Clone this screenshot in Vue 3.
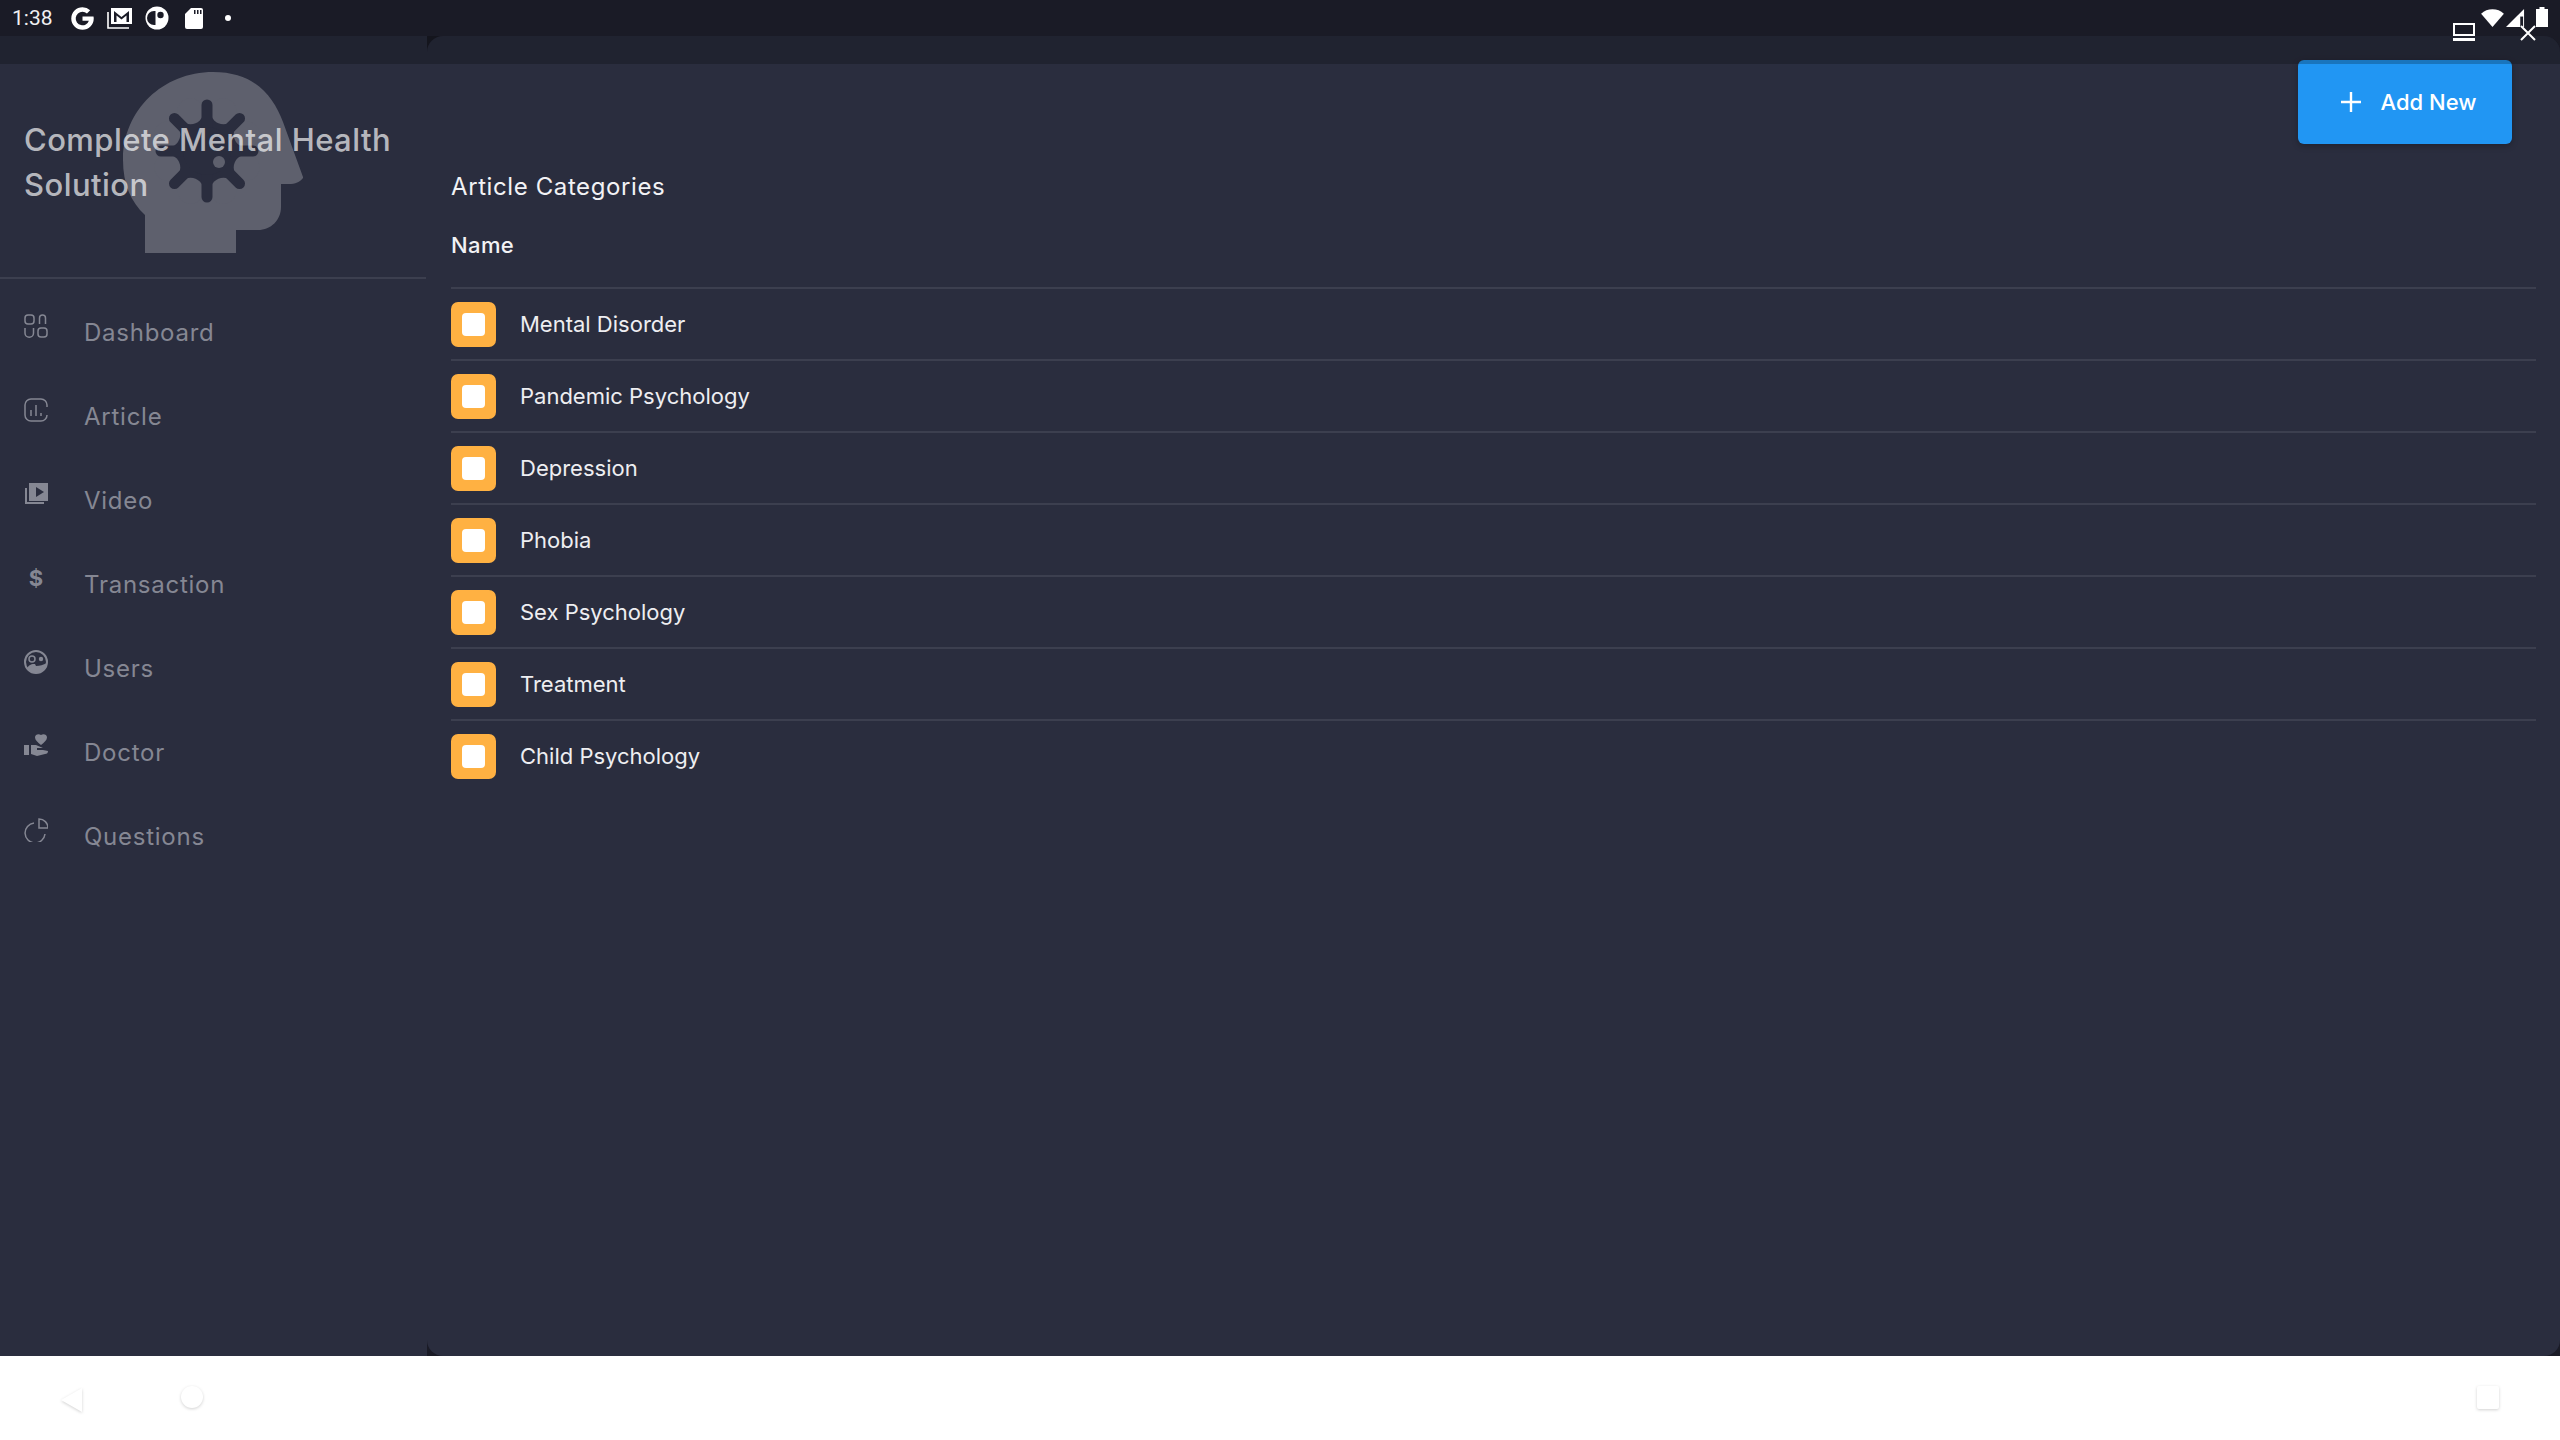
<template>
  <div class="screen">
    <div class="status-bar">
      <div class="status-left">
        <span class="time">1:38</span>
        <svg class="st-g" viewBox="3 3 18 18"><path d="M12 3.200a8.800 8.800 0 0 1 6 2.300l-2.500 2.500A5.300 5.300 0 0 0 12 6.700a5.300 5.300 0 1 0 5 7h-5v-3.300h8.600c.1.500.2 1 .2 1.600a8.800 8.800 0 1 1-8.800-8.800z" fill="#fff" /></svg>
        <svg class="st-m" viewBox="0 0 26 22"><path d="M1 5v16h21" fill="none" stroke="#fff" stroke-width="1.600" /><path d="M4 1h21v16H4z" fill="#fff" /><path d="M7 15V4l7.500 6L22 4v11h-2.500V8.500l-5 4-5-4V15z" fill="#1a1b26" /></svg>
        <svg class="st-c" viewBox="0 0 24 24"><circle cx="12" cy="12" r="11.500" fill="#fff" /><path d="M9 5h1.500v14H9a7 7 0 0 1 0-14z" fill="#1a1b26" /><circle cx="15.500" cy="9" r="3.200" fill="#1a1b26" /></svg>
        <svg class="st-sd" viewBox="0 0 18 21"><path d="M6 0h10a2 2 0 0 1 2 2v17a2 2 0 0 1-2 2H2a2 2 0 0 1-2-2V6z" fill="#fff" /><path d="M9 2h1.500v4H9zM12 2h1.500v4H12zM15 2h1.500v4H15z" fill="#1a1b26" /></svg>
        <span class="st-dot"></span>
      </div>
    </div>

    <div class="app">
      <aside class="sidebar">
        <div class="brand">
          <svg class="brand-logo" viewBox="0 0 180 181">
            <path d="M22 181V143C8 130 0 112 0 88C0 38 40 0 90 0C132 0 150 24 160 50L180 105C182 104 177 112 168 112H158V135C158 148 148 158 135 158H113V181Z" fill="#5e606d" />
            <circle cx="84" cy="79" r="37" fill="#2a2d3e" />
            <circle v-for="(p, i) in scallops" :key="i" :cx="p.x" :cy="p.y" r="13" fill="#5e606d" />
            <g stroke="#2a2d3e" stroke-width="11" stroke-linecap="round">
              <line v-for="(p, i) in arms" :key="i" x1="84" y1="79" :x2="p.x" :y2="p.y" />
            </g>
            <circle cx="84" cy="79" r="24" fill="#2a2d3e" />
            <circle cx="96" cy="90" r="6" fill="#5e606d" />
          </svg>
          <h1 class="brand-title">Complete Mental Health<br />Solution</h1>
        </div>

        <nav class="nav">
          <a v-for="item in navItems" :key="item.label" class="nav-item">
            <svg class="nav-icon" viewBox="0 0 24 24" v-html="item.icon"></svg>
            <span class="nav-label">{{ item.label }}</span>
          </a>
        </nav>
      </aside>

      <main class="content">
        <div class="toolbar">
          <button class="add-btn">
            <svg class="add-icon" viewBox="0 0 22 22"><path d="M11 1v20M1 11h20" stroke="#fff" stroke-width="2.400" /></svg>
            Add New
          </button>
        </div>
        <h2 class="heading">Article Categories</h2>
        <div class="col-name">Name</div>
        <ul class="rows">
          <li v-for="name in categories" :key="name" class="row">
            <span class="badge"><span class="badge-inner"></span></span>
            <span class="row-name">{{ name }}</span>
          </li>
        </ul>
      </main>

      <div class="top-shade"></div>
    </div>

    <div class="nav-bar">
      <svg class="nav-btn nav-back" viewBox="0 0 24 28"><path d="M2 14L23 2v24z" fill="#fff" /></svg>
      <span class="nav-btn nav-home"></span>
      <span class="nav-btn nav-recent"></span>
    </div>

    <div class="status-right">
      <svg class="st-laptop" viewBox="0 0 22 18"><path d="M1 1h20v11H1z" fill="none" stroke="#fff" stroke-width="2" /><path d="M0 15h22v3H0z" fill="#fff" /></svg>
      <svg class="st-wifi" viewBox="0 0 24 20"><path d="M12 20L0 6a18 18 0 0 1 24 0z" fill="#fff" /></svg>
      <svg class="st-signal" viewBox="0 0 20 20"><path d="M0 20L19 1v19z" fill="#fff" /><path d="M15 9h3v11h-3z" fill="#1a1b26" /></svg>
      <svg class="st-batt" viewBox="0 0 12 20"><path d="M3.500 0h5v2H12v18H0V2h3.500z" fill="#fff" /></svg>
      <svg class="st-close" viewBox="0 0 16 16"><path d="M1 1l14 14M15 1L1 15" stroke="#fff" stroke-width="2" /></svg>
    </div>
  </div>
</template>

<script setup>
const s = 'fill="none" stroke="currentColor" stroke-width="1.500"'

// virus cut out of the head: eight arms with round bites between them
const around = (radius, offset) =>
  Array.from({ length: 8 }, (_, i) => {
    const a = ((i * 45 + offset) * Math.PI) / 180
    return { x: 84 + radius * Math.cos(a), y: 79 + radius * Math.sin(a) }
  })
const arms = around(46, 0)
const scallops = around(43, 22.5)

const navItems = [
  {
    label: 'Dashboard',
    icon: `<g ${s}><rect x="1" y="1" width="9" height="9" rx="3"/><path d="M14 10V4a3 3 0 0 1 6 0v6" transform="translate(1.500 0)"/><path d="M1 14v5a3 3 0 0 0 8.500 0v-5"/><rect x="14" y="14" width="9" height="9" rx="3"/></g>`,
  },
  {
    label: 'Article',
    icon: `<g ${s}><path d="M23 9V7a6 6 0 0 0-6-6H7a6 6 0 0 0-6 6v10a6 6 0 0 0 6 6h10a6 6 0 0 0 6-6"/><path d="M7 12v6M12 7v11M17 15v3"/></g>`,
  },
  {
    label: 'Video',
    icon: `<path d="M5 1h19v18H5z" fill="currentColor"/><path d="M12 5l8 5-8 5z" fill="#2a2d3e"/><path d="M2 6v15h18" fill="none" stroke="currentColor" stroke-width="2"/>`,
  },
  {
    label: 'Transaction',
    icon: `<text x="12" y="20" text-anchor="middle" font-size="22" font-weight="700" font-family="Inter, sans-serif" fill="currentColor">$</text>`,
  },
  {
    label: 'Users',
    icon: `<circle cx="12" cy="12" r="11" fill="none" stroke="currentColor" stroke-width="2"/><circle cx="8" cy="9" r="3" fill="none" stroke="currentColor" stroke-width="1.500"/><circle cx="17" cy="9" r="2.200" fill="currentColor"/><path d="M3 19c2-5 5-5 8-5l1 2c4 0 7-1 11-3-1 6-5 10-11 10-4 0-7-2-9-4z" fill="currentColor"/>`,
  },
  {
    label: 'Doctor',
    icon: `<path d="M0 11h5v10H0z" fill="currentColor"/><path d="M17 1c2-1.500 6-1 6 2.500 0 2.500-3 5-6 7.500-3-2.500-6-5-6-7.500C11 0 15-.5 17 1z" fill="currentColor"/><path d="M7 11h5l7 3h-6v2h6l5 1c0 2-1 3-3 3l-8 2-6-2z" fill="currentColor"/>`,
  },
  {
    label: 'Questions',
    icon: `<g ${s}><path d="M10 5a10 10 0 1 0 11 11"/><path d="M15 1a9 9 0 0 1 9 9h-9z"/></g>`,
  },
]

const categories = [
  'Mental Disorder',
  'Pandemic Psychology',
  'Depression',
  'Phobia',
  'Sex Psychology',
  'Treatment',
  'Child Psychology',
]
</script>

<style>
html,
body {
  margin: 0;
  background: #fff;
}
</style>

<style scoped>
.screen {
  width: 2560px;
  height: 1440px;
  display: flex;
  flex-direction: column;
  position: relative;
  overflow: hidden;
  font-family: Inter, 'Open Sans', sans-serif;
  background: #1a1b26;
}

.status-bar {
  height: 36px;
  flex: none;
  display: flex;
  align-items: center;
  justify-content: space-between;
  padding: 0 12px;
  box-sizing: border-box;
}

.status-left {
  display: flex;
  align-items: center;
}

.time {
  font: 400 21px Roboto, sans-serif;
  color: #f0f0f2;
  width: 59px;
}

.st-g {
  width: 23px;
  height: 23px;
  margin-right: 13px;
}

.st-m {
  width: 26px;
  height: 22px;
  margin-right: 12px;
}

.st-c {
  width: 24px;
  height: 24px;
  margin-right: 16px;
}

.st-sd {
  width: 18px;
  height: 21px;
  margin-right: 22px;
}

.st-dot {
  width: 6px;
  height: 6px;
  border-radius: 50%;
  background: #fff;
}

/* system icons sit over the app's corner */
.status-right svg {
  position: absolute;
}

.st-laptop {
  left: 2453px;
  top: 23px;
  width: 22px;
  height: 18px;
}

.st-wifi {
  left: 2481px;
  top: 8px;
  width: 23px;
  height: 19px;
}

.st-signal {
  left: 2506px;
  top: 8px;
  width: 19px;
  height: 19px;
}

.st-batt {
  left: 2536px;
  top: 7px;
  width: 12px;
  height: 20px;
}

.st-close {
  left: 2520px;
  top: 25px;
  width: 16px;
  height: 16px;
}

.app {
  flex: 1;
  display: flex;
  position: relative;
  min-height: 0;
}

.top-shade {
  position: absolute;
  left: 0;
  right: 0;
  top: 0;
  height: 28px;
  background: rgba(0, 0, 0, 0.22);
  border-top-right-radius: 16px;
  pointer-events: none;
}

.sidebar {
  width: 427px;
  flex: none;
  background: #2a2d3e;
  box-sizing: border-box;
}

.brand {
  position: relative;
  height: 241px;
  margin-right: 1px;
  border-bottom: 2px solid #3c3f4f;
}

.brand-logo {
  position: absolute;
  left: 123px;
  top: 36px;
  width: 180px;
  height: 181px;
}

.brand-title {
  position: relative;
  margin: 0;
  padding: 81px 0 0 24px;
  font-size: 31px;
  font-weight: 500;
  line-height: 45px;
  letter-spacing: 0.45px;
  color: rgba(255, 255, 255, 0.68);
}

.nav {
  display: flex;
  flex-direction: column;
  padding-top: 11px;
}

.nav-item {
  height: 84px;
  display: flex;
  align-items: center;
  padding-left: 24px;
  color: #858793;
}

.nav-icon {
  width: 24px;
  height: 24px;
  margin: -12px 36px 0 0;
  flex: none;
}

.nav-label {
  font-size: 24px;
  letter-spacing: 0.75px;
}

.content {
  flex: 1;
  min-width: 0;
  background: #2a2d3e;
  border-radius: 16px;
  padding: 24px 24px 0;
  box-sizing: border-box;
}

.toolbar {
  display: flex;
  justify-content: flex-end;
  height: 84px;
  padding-right: 24px;
}

.add-btn {
  width: 214px;
  height: 84px;
  display: flex;
  align-items: center;
  justify-content: center;
  gap: 19px;
  padding: 0 0 0 6px;
  background: #2196f3;
  color: #fff;
  border: 0;
  border-radius: 6px;
  font: 500 22px Inter, sans-serif;
  box-shadow: 0 2px 6px rgba(0, 0, 0, 0.25);
}

.add-icon {
  width: 22px;
  height: 22px;
}

.heading {
  margin: 27px 0 0;
  font-size: 24px;
  line-height: 32px;
  font-weight: 400;
  letter-spacing: 0.6px;
  color: #f2f2f5;
}

.col-name {
  margin-top: 28px;
  font-size: 22px;
  line-height: 28px;
  font-weight: 500;
  letter-spacing: 0.4px;
  color: #f2f2f5;
}

.rows {
  list-style: none;
  margin: 28px 0 0;
  padding: 0;
}

.row {
  height: 70px;
  display: flex;
  align-items: center;
  border-top: 2px solid #3c3f4f;
}

.badge {
  width: 45px;
  height: 45px;
  flex: none;
  display: flex;
  align-items: center;
  justify-content: center;
  background: #ffb142;
  border-radius: 7px;
}

.badge-inner {
  width: 23px;
  height: 23px;
  background: #fff;
  border-radius: 4px;
}

.row-name {
  margin-left: 24px;
  font-size: 22px;
  color: #eeeef1;
}

.nav-bar {
  height: 84px;
  flex: none;
  background: #fff;
  position: relative;
}

.nav-btn {
  position: absolute;
  filter: drop-shadow(0 1px 1.500px rgba(0, 0, 0, 0.18));
}

.nav-back {
  left: 59px;
  top: 30px;
  width: 24px;
  height: 28px;
}

.nav-home {
  left: 181px;
  top: 30px;
  width: 22px;
  height: 22px;
  background: #fff;
  border-radius: 50%;
}

.nav-recent {
  left: 2477px;
  top: 30px;
  width: 22px;
  height: 23px;
  background: #fff;
  border-radius: 2px;
}
</style>
